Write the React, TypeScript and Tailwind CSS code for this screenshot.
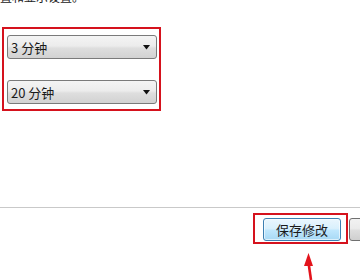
import React from "react";

const font = { fontFamily: '"Noto Sans CJK SC", "Noto Sans", sans-serif' };

function Combo({ label }: { label: string }) {
  return (
    <div className="flex h-[24px] w-[150px] items-center justify-between rounded-[3px] border border-[#7a7a7a] bg-[linear-gradient(to_bottom,#f4f4f4_0%,#ececec_45%,#dedede_55%,#d2d2d2_100%)] pl-[3px] pr-[5px]">
      <span className="text-[13px] leading-none text-[#1a1a1a]">{label}</span>
      <svg width="8" height="5" viewBox="0 0 8 5">
        <path d="M0 0 H7 L3.5 4.5 Z" fill="#111" />
      </svg>
    </div>
  );
}

export default function App() {
  return (
    <div className="relative h-[280px] w-[360px] overflow-hidden bg-white" style={font}>
      <div className="h-[6px] overflow-hidden">
        <div className="mt-[-11px] text-[12px] leading-[16px] text-[#222]">置和显示设置。</div>
      </div>
      <div className="ml-[2px] mt-[21px] flex h-[84px] w-[159px] flex-col gap-[21px] border-2 border-[#d5121d] pl-[3px] pt-[6px]">
        <Combo label="3 分钟" />
        <Combo label="20 分钟" />
      </div>
      <div className="mt-[96px] h-px w-full bg-[#c9c9c9]" />
      <div className="ml-[253px] mt-[5px] flex items-start">
        <div className="flex h-[31px] w-[95px] shrink-0 border-2 border-[#d5121d] pl-[8px] pt-[3px]">
          <div className="flex h-[23px] w-[78px] items-center justify-center rounded-[3px] border border-[#3c7fb1] bg-[linear-gradient(to_bottom,#eaf6fd_0%,#d9f0fc_45%,#bee6fd_55%,#a7d9f5_100%)] text-[13px] text-[#1a1a1a] shadow-[inset_0_0_0_1px_rgba(255,255,255,0.6)]">
            保存修改
          </div>
        </div>
        <div className="ml-[1px] mt-[5px] h-[23px] w-[78px] shrink-0 rounded-[3px] border border-[#707070] bg-[linear-gradient(to_bottom,#f2f2f2_0%,#ebebeb_45%,#dddddd_55%,#cfcfcf_100%)]" />
      </div>
      <svg className="absolute left-[300px] top-[250px]" width="20" height="30" viewBox="0 0 20 30">
        <path d="M8.5 3 L4 16 L13 16 Z" fill="#e3141c" />
        <path d="M8.7 14 L11 30" stroke="#e3141c" strokeWidth="2.6" />
      </svg>
    </div>
  );
}
